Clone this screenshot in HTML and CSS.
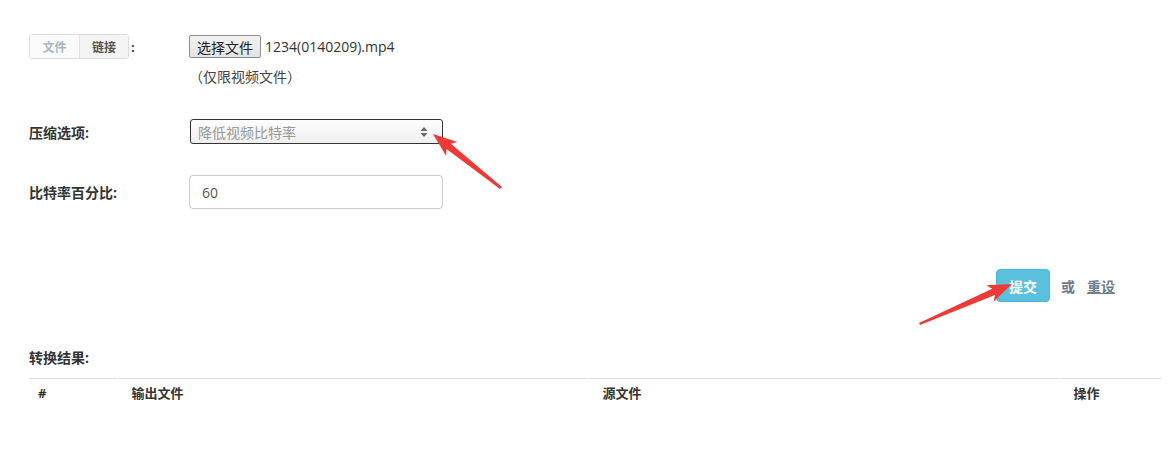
FILE: index.html
```html
<!DOCTYPE html>
<html lang="zh-CN">
<head>
    <meta charset="UTF-8">
    <title>视频压缩</title>
    <link rel="stylesheet" href="styles.css">
</head>
<body>

    <div class="page">
        <div class="row row-file">
            <div class="label">
                <span class="toggle">
                    <span class="toggle-item">文件</span>
                    <span class="toggle-item active">链接</span>
                </span>
                <span class="colon">:</span>
            </div>
            <div class="field">
                <button class="file-btn">选择文件</button>
                <span class="file-name">1234(0140209).mp4</span>
            </div>
        </div>
        <div class="help">（仅限视频文件）</div>

        <div class="row row-select">
            <div class="label bold">压缩选项:</div>
            <div class="select">
                <span>降低视频比特率</span>
                <svg class="select-arrow" width="8" height="12" viewBox="0 0 8 12">
                    <path d="M4 1 L7.5 5 L0.5 5 Z M4 11 L7.5 7 L0.5 7 Z" fill="#666"/>
                </svg>
            </div>
        </div>

        <div class="row row-input">
            <div class="label bold">比特率百分比:</div>
            <input class="text-input" type="text" value="60">
        </div>

        <div class="actions">
            <button class="submit-btn">提交</button>
            <span class="or">或</span>
            <a class="reset" href="#">重设</a>
        </div>

        <div class="results-title">转换结果:</div>
        <table class="results">
            <thead>
                <tr>
                    <th class="col-num">#</th>
                    <th class="col-out">输出文件</th>
                    <th class="col-src">源文件</th>
                    <th class="col-op">操作</th>
                </tr>
            </thead>
        </table>

        <!-- annotation arrows -->
        <svg class="marks" width="1174" height="453" viewBox="0 0 1174 453">
            <polygon points="502,187 500,189 446.5,149.1 446.2,155.9 433,134 457.4,141.9 450.9,143.7" fill="#ee3a37"/>
            <polygon points="919,323 920,325 995,295.1 993.5,301.8 1012,284 986.3,285.2 992.2,288.7" fill="#ee3a37"/>
        </svg>
    </div>

</body>
</html>
```

FILE: styles.css
```css
* {
    margin: 0;
    padding: 0;
    box-sizing: border-box;
}

body {
    font-family: 'Open Sans', 'Noto Sans CJK SC', sans-serif;
    font-size: 13px;
    color: #333;
    background: #fff;
}

.page {
    position: relative;
    width: 1174px;
    height: 453px;
    padding: 34px 13px 0 29px;
}

.row {
    display: flex;
    align-items: center;
}

.label {
    width: 160px;
    flex-shrink: 0;
    display: flex;
    align-items: center;
}

.bold {
    font-size: 14px;
    font-weight: bold;
    color: #333;
}

/* file / link toggle */
.toggle {
    display: inline-flex;
    border: 1px solid #dcdcdc;
    border-radius: 3px;
    background: #f7f7f7;
    height: 25px;
}

.toggle-item {
    width: 49px;
    display: flex;
    align-items: center;
    justify-content: center;
    font-size: 12px;
    font-weight: bold;
    color: #a9b4c2;
    background: #fafafa;
}

.toggle-item.active {
    color: #555;
    border-left: 1px solid #e3e3e3;
    background: #f4f4f4;
}

.colon {
    margin-left: 2px;
    font-weight: bold;
}

.field {
    display: flex;
    align-items: center;
}

.file-btn {
    font-family: inherit;
    font-size: 14px;
    color: #222;
    width: 72px;
    height: 23px;
    border: 1px solid #8f8f8f;
    border-radius: 2px;
    background: linear-gradient(#f3f3f3, #e3e3e3);
}

.file-name {
    margin-left: 4px;
    font-size: 14px;
    color: #333;
}

.help {
    margin: 10px 0 0 160px;
    font-size: 14px;
    line-height: 16px;
    color: #444;
}

.row-select {
    margin-top: 34px;
}

.select {
    width: 253px;
    height: 25px;
    margin-left: 1px;
    border: 1px solid #333;
    border-radius: 3px;
    background: linear-gradient(#fdfdfd, #efefef);
    display: flex;
    align-items: center;
    justify-content: space-between;
    padding: 0 14px 0 7px;
    font-size: 14px;
    color: #999;
}

.row-input {
    margin-top: 31px;
}

.text-input {
    width: 254px;
    height: 34px;
    border: 1px solid #ccc;
    border-radius: 4px;
    padding: 0 12px;
    font-family: inherit;
    font-size: 14px;
    color: #555;
}

.actions {
    display: flex;
    align-items: center;
    justify-content: flex-end;
    margin: 60px 46px 0 0;
    font-size: 14px;
}

.submit-btn {
    width: 54px;
    height: 33px;
    border: 1px solid #46b8da;
    border-radius: 4px;
    background: #5bc0de;
    color: #fff;
    font-family: inherit;
    font-size: 14px;
    font-weight: bold;
}

.or {
    margin-left: 11px;
    color: #6e7a8a;
    font-weight: bold;
}

.reset {
    margin-left: 12px;
    color: #6e7a8a;
    font-weight: bold;
    text-decoration: underline;
}

.results-title {
    margin-top: 47px;
    font-size: 14px;
    font-weight: bold;
    line-height: 18px;
}

.results {
    width: 100%;
    margin-top: 11px;
    border-collapse: collapse;
    border-top: 1px solid #ddd;
}

.results th {
    text-align: left;
    font-weight: bold;
    padding: 6px 14px 8px;
    line-height: 16px;
    border-left: 1px solid transparent;
    border-image: linear-gradient(#ddd, #fff 70%) 1;
}

.results .col-num {
    width: 88px;
    padding-left: 9px;
    border-left: none;
}

.results .col-out,
.results .col-src {
    width: 471px;
}

.marks {
    position: absolute;
    left: 0;
    top: 0;
    pointer-events: none;
}
```
